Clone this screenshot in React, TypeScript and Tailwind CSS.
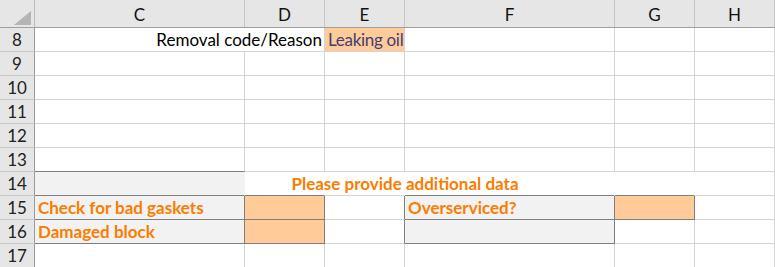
import React from 'react';

const ORANGE_TEXT = 'text-[#fa7d00] font-bold';

const widths = ['w-[210px]', 'w-[80px]', 'w-[80px]', 'w-[210px]', 'w-[80px]', 'w-[80px]'];
const letters = ['C', 'D', 'E', 'F', 'G', 'H'];

const RowHead: React.FC<{ n: number }> = ({ n }) => (
  <div className="w-[35px] shrink-0 bg-[#e6e6e6] border-r border-b border-r-[#9b9b9b] border-b-[#c8c8c8] flex items-end justify-center pb-[3px] text-[#222]">
    {n}
  </div>
);

const Cell: React.FC<{ w: string; r?: string; b?: string; bg?: string; className?: string; children?: React.ReactNode }> = ({
  w,
  r = 'border-r-[#d4d4d4]',
  b = 'border-b-[#d4d4d4]',
  bg = 'bg-white',
  className = '',
  children,
}) => (
  <div className={`${w} shrink-0 border-r border-b ${r} ${b} ${bg} flex items-end pb-[3px] overflow-visible whitespace-nowrap ${className}`}>
    {children}
  </div>
);

const EmptyRow: React.FC<{ n: number; bottoms?: string[] }> = ({ n, bottoms = [] }) => (
  <div className="flex h-[24px]">
    <RowHead n={n} />
    {widths.map((w, i) => (
      <Cell key={i} w={w} b={bottoms[i] ?? 'border-b-[#d4d4d4]'} />
    ))}
  </div>
);

export default function App() {
  return (
    <div className="w-[775px] h-[267px] overflow-hidden bg-white text-[17px] leading-none" style={{ fontFamily: 'Lato, "Open Sans", sans-serif' }}>
      {/* column headers */}
      <div className="flex h-[28px] bg-[#e6e6e6] border-b border-b-[#9f9f9f]">
        <div className="w-[35px] shrink-0 border-r border-r-[#bcbcbc] flex items-end justify-end pr-[3px] pb-[2px]">
          <svg width="17" height="14" viewBox="0 0 17 14">
            <polygon points="17,0 17,14 0,14" fill="#b4b4b4" />
          </svg>
        </div>
        {widths.map((w, i) => (
          <div key={i} className={`${w} shrink-0 border-r border-r-[#c6c6c6] flex items-end justify-center pb-[4px] text-[#111]`}>
            {letters[i]}
          </div>
        ))}
      </div>

      {/* row 8 */}
      <div className="flex h-[24px]">
        <RowHead n={8} />
        <Cell w="w-[290px]" className="justify-end pr-[2px] text-black">
          Removal code/Reason
        </Cell>
        <Cell w="w-[80px]" bg="bg-[#ffcc99]" className="pl-[3px] tracking-[-0.3px] text-[#3f3f76]">
          Leaking oil
        </Cell>
        <Cell w="w-[210px]" />
        <Cell w="w-[80px]" />
        <Cell w="w-[80px]" />
      </div>

      <EmptyRow n={9} />
      <EmptyRow n={10} />
      <EmptyRow n={11} />
      <EmptyRow n={12} />
      <EmptyRow n={13} bottoms={['border-b-[#7f7f7f]']} />

      {/* row 14: title centred across C:H */}
      <div className="flex h-[24px]">
        <RowHead n={14} />
        <div className="grid w-[740px]">
          <div className="flex [grid-area:1/1]">
            <Cell w="w-[210px]" bg="bg-[#f2f2f2]" r="border-r-[#f2f2f2]" b="border-b-[#7f7f7f]" />
            <Cell w="w-[80px]" r="border-r-white" b="border-b-[#7f7f7f]" />
            <Cell w="w-[80px]" r="border-r-white" />
            <Cell w="w-[210px]" r="border-r-white" b="border-b-[#7f7f7f]" />
            <Cell w="w-[80px]" r="border-r-white" b="border-b-[#7f7f7f]" />
            <Cell w="w-[80px]" />
          </div>
          <div className={`[grid-area:1/1] flex items-end justify-center pb-[4px] ${ORANGE_TEXT}`}>
            Please provide additional data
          </div>
        </div>
      </div>

      {/* row 15 */}
      <div className="flex h-[24px]">
        <RowHead n={15} />
        <Cell w="w-[210px]" bg="bg-[#f2f2f2]" r="border-r-[#7f7f7f]" b="border-b-[#7f7f7f]" className={`pl-[3px] ${ORANGE_TEXT}`}>
          Check for bad gaskets
        </Cell>
        <Cell w="w-[80px]" bg="bg-[#ffcc99]" r="border-r-[#7f7f7f]" b="border-b-[#7f7f7f]" />
        <Cell w="w-[80px]" r="border-r-[#7f7f7f]" />
        <Cell w="w-[210px]" bg="bg-[#f2f2f2]" r="border-r-[#7f7f7f]" b="border-b-[#7f7f7f]" className={`pl-[3px] ${ORANGE_TEXT}`}>
          Overserviced?
        </Cell>
        <Cell w="w-[80px]" bg="bg-[#ffcc99]" r="border-r-[#7f7f7f]" b="border-b-[#7f7f7f]" />
        <Cell w="w-[80px]" />
      </div>

      {/* row 16 */}
      <div className="flex h-[24px]">
        <RowHead n={16} />
        <Cell w="w-[210px]" bg="bg-[#f2f2f2]" r="border-r-[#7f7f7f]" b="border-b-[#7f7f7f]" className={`pl-[3px] ${ORANGE_TEXT}`}>
          Damaged block
        </Cell>
        <Cell w="w-[80px]" bg="bg-[#ffcc99]" r="border-r-[#7f7f7f]" b="border-b-[#7f7f7f]" />
        <Cell w="w-[80px]" r="border-r-[#7f7f7f]" />
        <Cell w="w-[210px]" bg="bg-[#f2f2f2]" r="border-r-[#7f7f7f]" b="border-b-[#7f7f7f]" />
        <Cell w="w-[80px]" />
        <Cell w="w-[80px]" />
      </div>

      <EmptyRow n={17} />
    </div>
  );
}
